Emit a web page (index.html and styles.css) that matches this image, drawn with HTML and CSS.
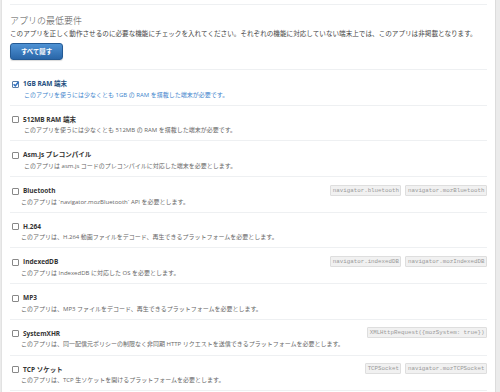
FILE: index.html
```html
<!DOCTYPE html>
<html lang="ja">
<head>
    <meta charset="UTF-8">
    <title>アプリの最低要件</title>
    <link rel="stylesheet" href="styles.css">
</head>
<body>
    <div class="card">
        <div class="prev-section"></div>
        <h2 class="title">アプリの最低要件</h2>
        <p class="intro">このアプリを正しく動作させるのに必要な機能にチェックを入れてください。それぞれの機能に対応していない端末上では、このアプリは非掲載となります。</p>
        <button class="btn-blue">すべて隠す</button>

        <ul class="features">
            <li class="feature device checked">
                <div class="feature-head">
                    <label><span class="box"><svg viewBox="0 0 8 8"><path d="M1.6 4.2 L3.3 5.9 L6.6 1.8" /></svg></span>1GB RAM 端末</label>
                </div>
                <p class="desc">このアプリを使うには少なくとも 1GB の RAM を搭載した端末が必要です。</p>
            </li>
            <li class="feature device">
                <div class="feature-head">
                    <label><span class="box"></span>512MB RAM 端末</label>
                </div>
                <p class="desc">このアプリを使うには少なくとも 512MB の RAM を搭載した端末が必要です。</p>
            </li>
            <li class="feature device">
                <div class="feature-head">
                    <label><span class="box"></span>Asm.js プレコンパイル</label>
                </div>
                <p class="desc">このアプリは asm.js コードのプレコンパイルに対応した端末を必要とします。</p>
            </li>
            <li class="feature">
                <div class="feature-head">
                    <label><span class="box"></span>Bluetooth</label>
                    <div class="apis"><code>navigator.bluetooth</code><code>navigator.mozBluetooth</code></div>
                </div>
                <p class="desc">このアプリは `navigator.mozBluetooth` API を必要とします。</p>
            </li>
            <li class="feature">
                <div class="feature-head">
                    <label><span class="box"></span>H.264</label>
                </div>
                <p class="desc">このアプリは、H.264 動画ファイルをデコード、再生できるプラットフォームを必要とします。</p>
            </li>
            <li class="feature">
                <div class="feature-head">
                    <label><span class="box"></span>IndexedDB</label>
                    <div class="apis"><code>navigator.indexedDB</code><code>navigator.mozIndexedDB</code></div>
                </div>
                <p class="desc">このアプリは IndexedDB に対応した OS を必要とします。</p>
            </li>
            <li class="feature">
                <div class="feature-head">
                    <label><span class="box"></span>MP3</label>
                </div>
                <p class="desc">このアプリは、MP3 ファイルをデコード、再生できるプラットフォームを必要とします。</p>
            </li>
            <li class="feature">
                <div class="feature-head">
                    <label><span class="box"></span>SystemXHR</label>
                    <div class="apis"><code>XMLHttpRequest({mozSystem: true})</code></div>
                </div>
                <p class="desc">このアプリは、同一配信元ポリシーの制限なく非同期 HTTP リクエストを送信できるプラットフォームを必要とします。</p>
            </li>
            <li class="feature">
                <div class="feature-head">
                    <label><span class="box"></span>TCP ソケット</label>
                    <div class="apis"><code>TCPSocket</code><code>navigator.mozTCPSocket</code></div>
                </div>
                <p class="desc">このアプリは、TCP 生ソケットを開けるプラットフォームを必要とします。</p>
            </li>
        </ul>
    </div>
</body>
</html>
```

FILE: styles.css
```css
/* requirements panel */
html, body {
    margin: 0;
    padding: 0;
}
body {
    background: #ebebeb;
    font-family: "Open Sans", "Noto Sans CJK JP", sans-serif;
    color: #333;
    overflow: hidden;
}
.card {
    background: #fff;
    margin: 0 4px 0 1px;
    padding: 0 8px;
    border-left: 1px solid #e2e2e2;
    border-right: 1px solid #dcdcdc;
    min-height: 400px;
}
.prev-section {
    height: 4px;
    border-bottom: 1px solid #eef0f2;
}
.title {
    margin: 10px 0 0;
    font-size: 9px;
    line-height: 12px;
    font-weight: 300;
    color: #555;
}
.intro {
    margin: 2px 0 0;
    font-size: 6.6px;
    line-height: 10px;
    color: #444;
    white-space: nowrap;
}
.btn-blue {
    display: block;
    margin-top: 4px;
    width: 53px;
    height: 17px;
    padding: 0;
    border: 1px solid #245a94;
    border-radius: 3px;
    background: linear-gradient(to bottom, #4f92d4, #2966a8);
    box-shadow: 0 1px 1px rgba(0, 0, 0, 0.15);
    color: #fff;
    font-family: "Noto Sans CJK JP", sans-serif;
    font-size: 6.4px;
    font-weight: bold;
}
.features {
    list-style: none;
    margin: 9px 0 0;
    padding: 0;
    border-top: 1px solid #eef0f2;
}
.feature {
    padding: 9px 0 5.2px;
    border-bottom: 1px solid #eef0f2;
}
.feature-head {
    display: flex;
    align-items: center;
    justify-content: space-between;
    height: 10px;
}
.feature-head label {
    display: flex;
    align-items: center;
    font-size: 6.5px;
    font-weight: bold;
    line-height: 10px;
    color: #333;
}
.box {
    width: 5px;
    height: 5px;
    margin: 0 4px 0 2px;
    border: 1px solid #888;
    border-radius: 1px;
    background: #fff;
    position: relative;
}
.box svg {
    position: absolute;
    left: -1px;
    top: -2px;
    width: 8px;
    height: 8px;
    fill: none;
    stroke: #2d6fc0;
    stroke-width: 1.6;
}
.checked .box {
    border-color: #5a7fa8;
}
.checked label {
    color: #244f80;
}
.desc {
    margin: 0.5px 0 0;
    padding-left: 11px;
    font-size: 6px;
    line-height: 10px;
    color: #666;
    white-space: nowrap;
}
.device .desc {
    padding-left: 14px;
}
.checked .desc {
    color: #3d84cc;
}
.apis {
    display: flex;
    gap: 4px;
    margin-top: -2px;
}
.apis code {
    font-family: "Liberation Mono", "DejaVu Sans Mono", monospace;
    font-size: 5.8px;
    line-height: 9px;
    padding: 0 1.5px;
    background: #f1f1f1;
    border: 1px solid #dedede;
    border-radius: 1px;
    color: #999;
}
```
